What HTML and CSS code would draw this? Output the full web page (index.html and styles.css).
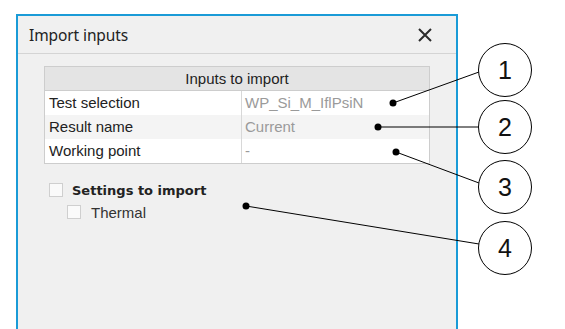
FILE: index.html
```html
<!DOCTYPE html>
<html>
<head>
<meta charset="utf-8">
<link rel="stylesheet" href="styles.css">
</head>
<body>
<div class="page">
  <div class="dialog">
    <div class="titlebar">
      <span class="title">Import inputs</span>
      <svg class="close" width="14" height="14" viewBox="0 0 14 14"><path d="M1 1L13 13M13 1L1 13" stroke="#2b2b2b" stroke-width="2"/></svg>
    </div>
    <div class="content">
      <div class="table">
        <div class="thead">Inputs to import</div>
        <div class="row"><div class="key">Test selection</div><div class="val">WP_Si_M_IflPsiN</div></div>
        <div class="row alt"><div class="key">Result name</div><div class="val">Current</div></div>
        <div class="row"><div class="key">Working point</div><div class="val">-</div></div>
      </div>
      <div class="settings">
        <div class="check-row"><span class="box"></span><span class="bold">Settings to import</span></div>
        <div class="check-row sub"><span class="box"></span><span>Thermal</span></div>
      </div>
    </div>
  </div>
  <svg class="callouts" width="565" height="329" viewBox="0 0 565 329">
    <g stroke="#000" stroke-width="1" fill="none">
      <line x1="393" y1="103" x2="479" y2="72"/>
      <line x1="378" y1="127" x2="479" y2="127"/>
      <line x1="396" y1="152" x2="479" y2="183"/>
      <line x1="246" y1="206" x2="479" y2="244"/>
    </g>
    <g fill="#000">
      <circle cx="393" cy="103" r="3.5"/>
      <circle cx="378" cy="127" r="3.5"/>
      <circle cx="396" cy="152" r="3.5"/>
      <circle cx="246" cy="206" r="3.5"/>
    </g>
    <g stroke="#000" stroke-width="1" fill="#fff">
      <circle cx="505" cy="70" r="26.5"/>
      <circle cx="505" cy="127" r="26.5"/>
      <circle cx="505" cy="187" r="26.5"/>
      <circle cx="505" cy="248" r="26.5"/>
    </g>
    <g class="num" font-family="Liberation Sans, Arial, sans-serif" font-size="25" fill="#111" text-anchor="middle">
      <text x="505" y="79">1</text>
      <text x="505" y="136">2</text>
      <text x="505" y="196">3</text>
      <text x="505" y="257">4</text>
    </g>
  </svg>
</div>
</body>
</html>
```
FILE: styles.css
```css
html, body {
  margin: 0;
  padding: 0;
  background: #fff;
}
.page {
  position: relative;
  width: 565px;
  height: 329px;
  overflow: hidden;
}
.dialog {
  margin: 14px 0 0 16px;
  width: 438px;
  height: 330px;
  border: 2px solid #1a9bd7;
  border-bottom: none;
  background: #f0f0f0;
  display: flex;
  flex-direction: column;
}
.titlebar {
  height: 37px;
  border-bottom: 1px solid #d4d4d4;
  display: flex;
  align-items: center;
  justify-content: space-between;
  padding: 0 24px 0 11px;
}
.title {
  font-family: "Noto Sans", "Open Sans", sans-serif;
  font-size: 15.5px;
  color: #222;
  letter-spacing: -0.1px;
}
.close {
  display: block;
}
.content {
  padding: 12px 26px 0 26px;
}
.table {
  border: 1px solid #cdcdcd;
  font-family: "Liberation Sans", Arial, sans-serif;
  font-size: 15px;
  background: #fff;
}
.thead {
  height: 23px;
  line-height: 23px;
  text-align: center;
  background: #e4e4e4;
  border-bottom: 1px solid #cdcdcd;
  color: #222;
}
.row {
  display: flex;
  height: 24px;
  line-height: 24px;
  background: #fff;
}
.row.alt {
  background: #f4f4f4;
}
.key {
  width: 192px;
  padding-left: 4px;
  border-right: 1px solid #d8d8d8;
  color: #222;
}
.val {
  padding-left: 3px;
  color: #9a9a9a;
}
.settings {
  padding-top: 16px;
  padding-left: 5px;
  font-family: "Liberation Sans", Arial, sans-serif;
  font-size: 15px;
  color: #333;
}
.check-row {
  display: flex;
  align-items: center;
  height: 20px;
}
.check-row.sub {
  padding-left: 18px;
  height: 24px;
}
.box {
  width: 12px;
  height: 12px;
  border: 1px solid #cfcfcf;
  background: #fafafa;
  margin-right: 9px;
}
.sub .box {
  margin-right: 10px;
}
.bold {
  font-family: "DejaVu Sans", sans-serif;
  font-weight: bold;
  font-size: 13px;
  color: #222;
}
.callouts {
  position: absolute;
  left: 0;
  top: 0;
}
```
